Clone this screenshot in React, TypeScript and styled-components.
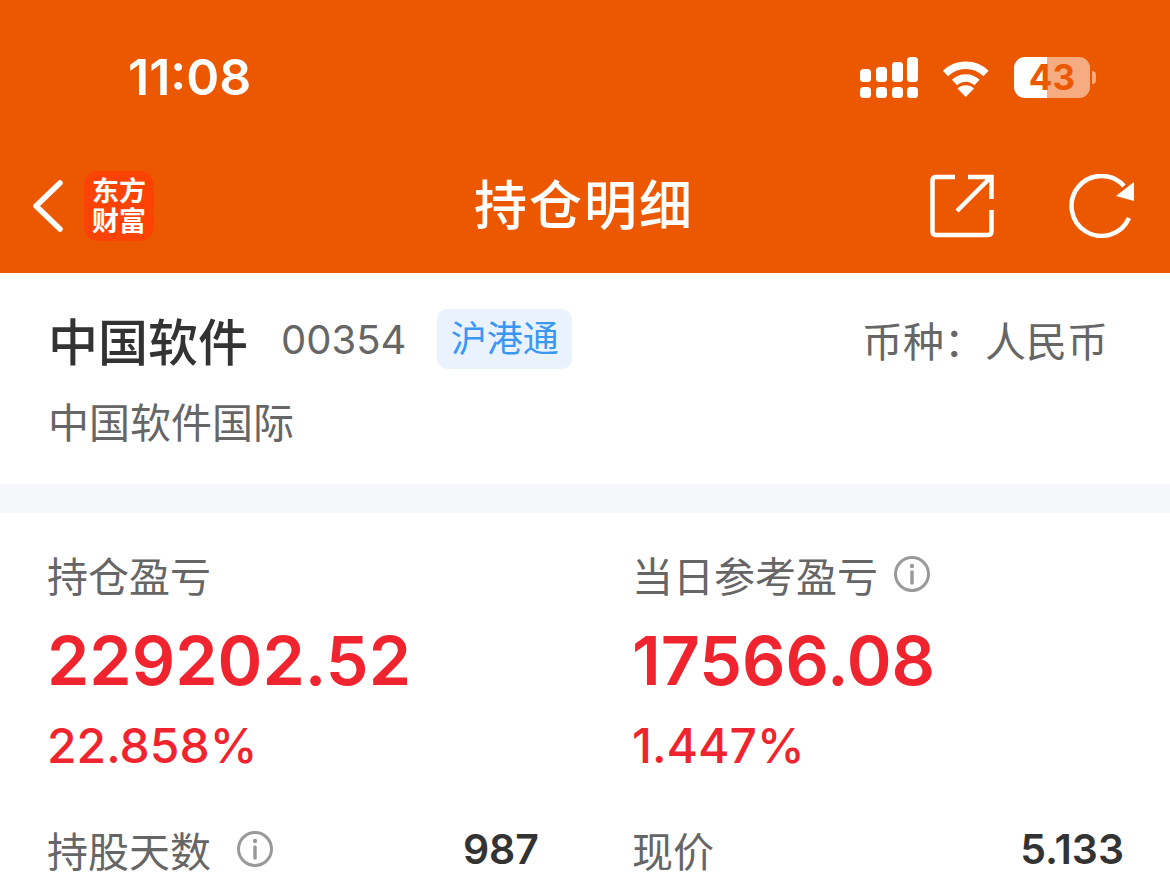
import styled, { createGlobalStyle } from 'styled-components';

const SANS = `Inter, "Noto Sans CJK SC", sans-serif`;
const RED = '#f0242e';

const GlobalStyle = createGlobalStyle`
  html, body {
    margin: 0;
    padding: 0;
    background: #fff;
    overflow: hidden;
  }
  body {
    font-family: ${SANS};
  }
`;

const Page = styled.div`
  width: 1170px;
  height: 880px;
  overflow: hidden;
  background: #fff;
`;

const Header = styled.header`
  height: 273px;
  box-sizing: border-box;
  background: #ec5800;
  padding-top: 57px;
`;

const StatusBar = styled.div`
  height: 41px;
  display: flex;
  align-items: center;
  justify-content: space-between;
  padding: 0 80px 0 128px;
`;

const Time = styled.div`
  font-size: 50px;
  font-weight: 600;
  line-height: 41px;
  color: #fff;
`;

const StatusIcons = styled.div`
  display: flex;
  align-items: center;
  gap: 23px;
`;

const Battery = styled.div`
  position: relative;
  width: 76px;
  height: 41px;
  border-radius: 11px;
  background: linear-gradient(to right, #fff 43%, rgba(255, 255, 255, 0.5) 43%);
  color: #ec5800;
  font-size: 35px;
  font-weight: 700;
  line-height: 41px;
  text-align: center;
  &::after {
    content: '';
    position: absolute;
    right: -6px;
    top: 14px;
    width: 4px;
    height: 13px;
    border-radius: 0 4px 4px 0;
    background: rgba(255, 255, 255, 0.5);
  }
`;

const NavBar = styled.nav`
  margin-top: 73px;
  height: 70px;
  display: grid;
  grid-template-columns: 1fr auto 1fr;
  align-items: center;
  padding: 0 34px 0 32px;
`;

const NavLeft = styled.div`
  display: flex;
  align-items: center;
  gap: 20px;
`;

const NavRight = styled.div`
  display: flex;
  align-items: center;
  justify-content: flex-end;
  gap: 74px;
`;

const Logo = styled.div`
  width: 70px;
  height: 70px;
  box-sizing: border-box;
  padding-top: 6px;
  border-radius: 14px;
  background: #fb4305;
  color: #fff;
  font-size: 27px;
  font-weight: 700;
  line-height: 30px;
  text-align: center;
`;

const Title = styled.h1`
  margin: 0;
  font-size: 53px;
  font-weight: 500;
  line-height: 70px;
  letter-spacing: 2px;
  color: #fff;
`;

const InfoSection = styled.section`
  height: 211px;
  box-sizing: border-box;
  padding: 36px 62px 0 48px;
`;

const NameRow = styled.div`
  height: 60px;
  display: flex;
  align-items: center;
`;

const StockName = styled.div`
  font-size: 50px;
  font-weight: 500;
  color: #333;
`;

const StockCode = styled.div`
  margin-left: 33px;
  font-size: 40px;
  color: #666;
`;

const Tag = styled.div`
  margin-left: 31px;
  width: 135px;
  height: 60px;
  border-radius: 10px;
  background: #eaf3fd;
  color: #3a98f5;
  font-size: 36px;
  line-height: 60px;
  text-align: center;
`;

const Currency = styled.div`
  margin-left: auto;
  font-size: 41px;
  color: #666;
`;

const SubName = styled.div`
  margin-top: 24px;
  font-size: 41px;
  line-height: 60px;
  color: #666;
`;

const Divider = styled.div`
  height: 29px;
  background: #f5f7fa;
`;

const Stats = styled.section`
  display: grid;
  grid-template-columns: 585px 492px;
  padding: 36px 0 0 47px;
`;

const StatColumn = styled.div`
  display: flex;
  flex-direction: column;
`;

const LabelRow = styled.div`
  height: 50px;
  display: flex;
  align-items: center;
  gap: 16px;
`;

const Label = styled.span`
  font-size: 41px;
  color: #666;
`;

const BigValue = styled.div`
  margin-top: 21px;
  font-size: 68px;
  font-weight: 600;
  line-height: 80px;
  color: ${RED};
`;

const Percent = styled.div`
  margin-top: 16px;
  font-size: 48px;
  font-weight: 500;
  line-height: 60px;
  color: ${RED};
`;

const DetailRow = styled.div<{ $width: number }>`
  margin-top: 48px;
  width: ${p => p.$width}px;
  height: 50px;
  display: flex;
  align-items: center;
  justify-content: space-between;
`;

const DetailLabel = styled.div`
  display: flex;
  align-items: center;
  gap: 26px;
`;

const DetailValue = styled.span`
  font-size: 41px;
  font-weight: 600;
  color: #333;
`;

function SignalIcon() {
  const bars = [
    { x: 0, y: 12 },
    { x: 16, y: 10 },
    { x: 32, y: 5 },
    { x: 47, y: 0 },
  ];
  return (
    <svg width="58" height="41" viewBox="0 0 58 41" fill="#fff">
      {bars.map(b => (
        <g key={b.x}>
          <rect x={b.x} y={b.y} width="11" height={25 - b.y} rx="3.5" />
          <rect x={b.x} y="30" width="11" height="11" rx="3.5" />
        </g>
      ))}
    </svg>
  );
}

function WifiIcon() {
  return (
    <svg width="50" height="38" viewBox="0 0 50 38">
      <path d="M4.5 14.5A29 29 0 0 1 45 14.5" fill="none" stroke="#fff" strokeWidth="7.5" />
      <path d="M13.5 23.5A16 16 0 0 1 36 23.5" fill="none" stroke="#fff" strokeWidth="7.5" />
      <path d="M16.5 29.5A12 12 0 0 1 33 29.5L24.7 38Z" fill="#fff" />
    </svg>
  );
}

function BackIcon() {
  return (
    <svg width="32" height="52" viewBox="0 0 32 52" fill="none">
      <path d="M28 3L4 26L28 49" stroke="#fff" strokeWidth="5.5" strokeLinecap="round" strokeLinejoin="round" />
    </svg>
  );
}

function ShareIcon() {
  return (
    <svg width="64" height="64" viewBox="0 0 64 64" fill="none" stroke="#fff" strokeWidth="4.5">
      <path d="M25 3H6Q2.5 3 2.5 6.500V57Q2.500 61 6 61H58Q61.500 61 61.500 57V36" />
      <path d="M38 3H61.500V25" />
      <path d="M27 37L61 3" />
    </svg>
  );
}

function RefreshIcon() {
  return (
    <svg width="68" height="64" viewBox="0 0 68 64" fill="none">
      <path d="M61 44A30 30 0 1 1 56 12" stroke="#fff" strokeWidth="4.5" />
      <path d="M66 8V27L48 22Z" fill="#fff" />
    </svg>
  );
}

function InfoIcon() {
  return (
    <svg width="36" height="36" viewBox="0 0 36 36" fill="none" stroke="#999">
      <circle cx="18" cy="18" r="16.500" strokeWidth="3" />
      <path d="M18 16V27" strokeWidth="3.500" strokeLinecap="round" />
      <circle cx="18" cy="10" r="2.200" fill="#999" stroke="none" />
    </svg>
  );
}

export default function App() {
  return (
    <Page>
      <GlobalStyle />
      <Header>
        <StatusBar>
          <Time>11:08</Time>
          <StatusIcons>
            <SignalIcon />
            <WifiIcon />
            <Battery>43</Battery>
          </StatusIcons>
        </StatusBar>
        <NavBar>
          <NavLeft>
            <BackIcon />
            <Logo>
              东方
              <br />
              财富
            </Logo>
          </NavLeft>
          <Title>持仓明细</Title>
          <NavRight>
            <ShareIcon />
            <RefreshIcon />
          </NavRight>
        </NavBar>
      </Header>

      <InfoSection>
        <NameRow>
          <StockName>中国软件</StockName>
          <StockCode>00354</StockCode>
          <Tag>沪港通</Tag>
          <Currency>币种：人民币</Currency>
        </NameRow>
        <SubName>中国软件国际</SubName>
      </InfoSection>

      <Divider />

      <Stats>
        <StatColumn>
          <LabelRow>
            <Label>持仓盈亏</Label>
          </LabelRow>
          <BigValue>229202.52</BigValue>
          <Percent>22.858%</Percent>
          <DetailRow $width={492}>
            <DetailLabel>
              <Label>持股天数</Label>
              <InfoIcon />
            </DetailLabel>
            <DetailValue>987</DetailValue>
          </DetailRow>
        </StatColumn>
        <StatColumn>
          <LabelRow>
            <Label>当日参考盈亏</Label>
            <InfoIcon />
          </LabelRow>
          <BigValue>17566.08</BigValue>
          <Percent>1.447%</Percent>
          <DetailRow $width={492}>
            <Label>现价</Label>
            <DetailValue>5.133</DetailValue>
          </DetailRow>
        </StatColumn>
      </Stats>
    </Page>
  );
}
